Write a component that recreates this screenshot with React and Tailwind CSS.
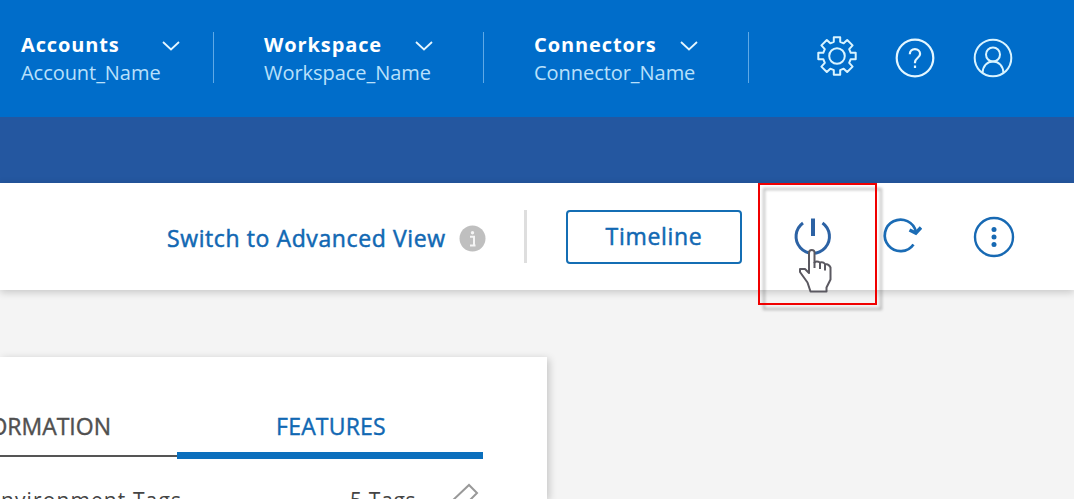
const selectors = [
  { title: 'Accounts', name: 'Account_Name', box: 'w-[193px] ml-[21px]', head: 'w-[159px] tracking-[0.85px]' },
  { title: 'Workspace', name: 'Workspace_Name', box: 'w-[220px] ml-[50px]', head: 'w-[169px] tracking-[0.9px]' },
  { title: 'Connectors', name: 'Connector_Name', box: 'w-[215px] ml-[50px]', head: 'w-[164px] tracking-[0.9px]' },
];

function Chevron() {
  return (
    <svg className="mt-0.5 h-3 w-[18px]" viewBox="0 0 18 12" fill="none" stroke="#e4f6ff" strokeWidth="1.8">
      <path d="M1 2 9 9.500 17 2" />
    </svg>
  );
}

function Header() {
  return (
    <header className="flex h-[117px] bg-[#006dca] pt-8">
      {selectors.map((s) => (
        <div key={s.title} className={`${s.box} flex h-[51px] shrink-0 flex-col border-r border-[#5fa9e6] whitespace-nowrap`}>
          <div className={`${s.head} flex h-[26px] items-center justify-between text-[20px] font-bold text-white`}>
            <span>{s.title}</span>
            <Chevron />
          </div>
          <div className="h-[30px] text-[20px] leading-[30px] tracking-[-0.05px] text-[#b9e0fb]">{s.name}</div>
        </div>
      ))}
      <div className="ml-[68px] flex h-[51px] items-center gap-[38px]">
        <svg className="mb-1 size-10" viewBox="0 0 40 40" fill="none" stroke="#d9f4ff" strokeWidth="2" strokeLinejoin="round">
          <path d="M16.800 1.300h6.400v4.500l3.500 1.500 3.500-3.300 5.400 5.400-3.400 3.700 1.500 3.700h5v6.400h-5l-1.500 3.700 3.400 3.700-5.400 5.400-3.500-3.300-3.500 1.500v4.500h-6.400v-4.500l-3.500-1.500-3.500 3.300-5.400-5.400 3.400-3.700-1.500-3.700h-5v-6.400h5l1.500-3.700-3.400-3.700L9.800 4l3.500 3.300 3.500-1.500z" />
          <circle cx="20" cy="20" r="7.800" />
        </svg>
        <svg className="size-10" viewBox="0 0 40 40" fill="none" stroke="#e4f7ff" strokeWidth="2.200">
          <circle cx="20" cy="20" r="18.300" />
          <path d="M14.800 16.200c0-3 2.100-5 5.100-5s5.200 1.900 5.200 4.700c0 4-5.100 4.200-5.100 8.300v1" />
          <path d="M20 27.500v2.500" />
        </svg>
        <svg className="size-10" viewBox="0 0 40 40" fill="none" stroke="#d9f4ff" strokeWidth="2">
          <circle cx="20" cy="20" r="18.300" />
          <circle cx="20" cy="16.500" r="7" />
          <path d="M9.500 35c.4-7 4.500-11.500 10.500-11.500S30.100 28 30.500 35" />
        </svg>
      </div>
    </header>
  );
}

function Highlight() {
  return (
    <div className="absolute top-0 left-[758px] h-[122px] w-[119px] border-2 border-[#f00000] drop-shadow-[5px_5px_1.5px_rgba(0,0,0,0.27)]" />
  );
}

function Toolbar() {
  return (
    <div className="relative z-10 flex h-[107px] items-center bg-white pl-[167px] text-[#1168b3] shadow-[0_2px_8px_rgba(0,0,0,0.2)]">
      <div className="w-[279px] pt-0.5 text-[23px] leading-8 tracking-[0.6px] whitespace-nowrap [-webkit-text-stroke:0.5px]">
        Switch to Advanced View
      </div>
      <svg className="mt-1 ml-[13px] size-[27px] shrink-0" viewBox="0 0 27 27">
        <circle cx="13.500" cy="13.500" r="13" fill="#bfbfbf" />
        <circle cx="13.500" cy="7.800" r="1.700" fill="#f5f5f5" />
        <path d="M11 11.800h4v8M11 20.500h5.500" fill="none" stroke="#f5f5f5" strokeWidth="2" />
      </svg>
      <div className="ml-[38px] h-[53px] w-[3px] shrink-0 bg-[#dedede]" />
      <button className="ml-[39px] h-[54px] w-[176px] shrink-0 rounded-[4px] border-2 border-[#146eb4] text-[23px] tracking-[0.7px] [-webkit-text-stroke:0.5px]">
        Timeline
      </button>
      <div className="relative ml-[51px] size-10 shrink-0">
        <svg className="size-10" viewBox="0 0 40 40" fill="none" stroke="#2c62a4" strokeWidth="3">
          <path d="M10 6A16.700 16.700 0 1 0 29.500 6" />
          <path d="M20 1.500v17.500" strokeWidth="4" />
        </svg>
        <svg className="absolute top-[32px] left-[6px] h-[46px] w-[36px]" viewBox="0 0 36 46" fill="white" stroke="#5b5961" strokeWidth="2" strokeLinejoin="round">
          <path d="M10 24V4q0-3 2.800-3T15.500 4v9.500q2-2 5.500 0 3.200-1 5 1.500 4 0 5.500 3.500v12l-4 8v4H11.500l-3-9L1 23v-3h5l4 4z" />
          <path d="M15.500 13v6M21 13.500v6.500M26 15v6.500" />
        </svg>
      </div>
      <svg className="mb-1 ml-[49px] h-10 w-10 shrink-0" viewBox="0 0 40 40" fill="none" stroke="#1b6cb5" strokeWidth="2.700">
        <path d="M31.500 29.500A15.800 15.800 0 1 1 34 17" />
        <path d="M27.500 15 33.800 18 39 12.500" strokeWidth="3.500" />
      </svg>
      <svg className="ml-[51px] size-[42px] shrink-0" viewBox="0 0 42 42" fill="none" stroke="#1769b3" strokeWidth="2.400">
        <circle cx="21" cy="21" r="19" />
        <g fill="#1769b3" stroke="none">
          <circle cx="21" cy="13.500" r="2.500" />
          <circle cx="21" cy="21" r="2.500" />
          <circle cx="21" cy="28.500" r="2.500" />
        </g>
      </svg>
      <Highlight />
    </div>
  );
}

function DetailsCard() {
  return (
    <section className="mt-[67px] h-[142px] w-[547px] bg-white pt-[53px] shadow-[2px_2px_8px_rgba(0,0,0,0.2)]">
      <div className="flex w-[483px] items-start text-[23px] leading-[32px] whitespace-nowrap [-webkit-text-stroke:0.4px]">
        <div className="flex h-[47px] w-[177px] justify-end overflow-hidden border-b-2 border-[#555] pr-[66px] text-[#505050]">
          INFORMATION
        </div>
        <div className="h-[49px] w-[306px] border-b-[7px] border-[#0b6fbd] pl-0.5 text-center tracking-[0.2px] text-[#1168b3]">
          FEATURES
        </div>
      </div>
      <div className="flex h-[40px] overflow-hidden pt-[26px] text-[21px] leading-[30px] whitespace-nowrap text-[#444]">
        <div className="flex w-[182px] shrink-0 justify-end tracking-[1.1px]">Environment Tags</div>
        <div className="ml-[168px] w-[68px] shrink-0 tracking-[0.7px]">5 Tags</div>
        <svg className="-mt-0.5 ml-[29px] size-8 shrink-0" viewBox="0 0 32 32" fill="none" stroke="#999" strokeWidth="2">
          <path d="M4 19 22 2l8 8-18 18-9 2z" />
        </svg>
      </div>
    </section>
  );
}

export default function App() {
  return (
    <main className="h-[499px] w-[1074px] overflow-hidden bg-[#f4f4f4] font-['Open_Sans','Noto_Sans',sans-serif]">
      <Header />
      <div className="h-[66px] bg-[#2457a0]" />
      <Toolbar />
      <DetailsCard />
    </main>
  );
}
